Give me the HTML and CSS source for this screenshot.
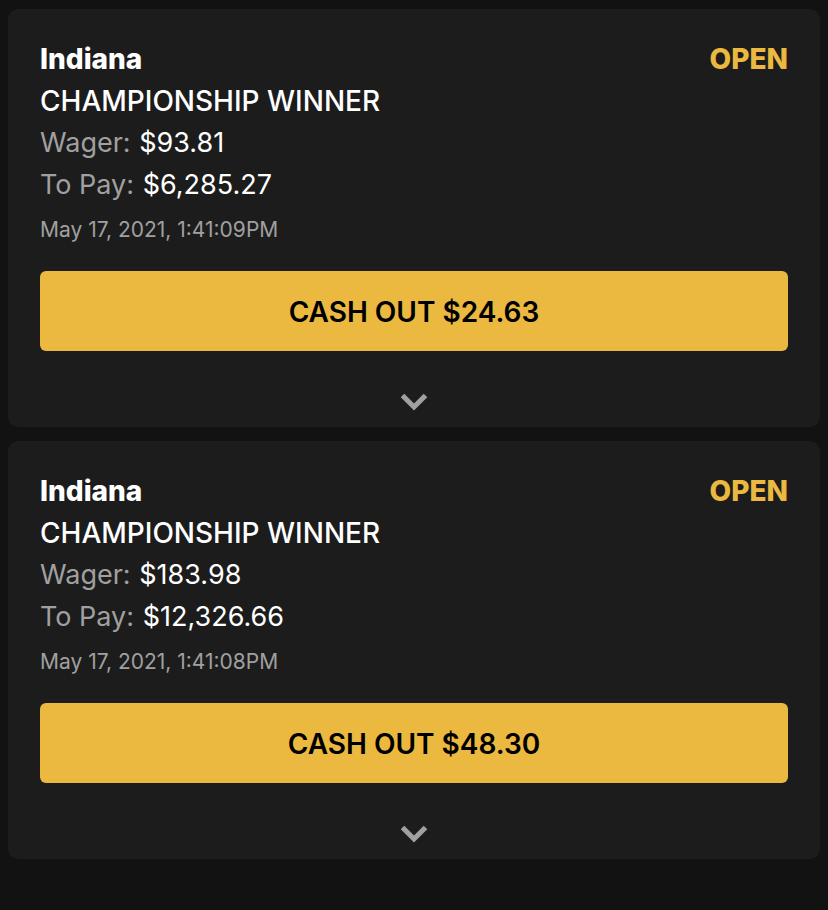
FILE: index.html
```html
<!DOCTYPE html>
<html lang="en">

<head>
    <meta charset="UTF-8">
    <meta name="viewport" content="width=device-width, initial-scale=1.0">
    <title>My Bets</title>
    <link rel="stylesheet" href="styles.css">
</head>

<body>
    <main class="bets">
        <article class="bet">
            <div class="bet-header">
                <h2 class="team">Indiana</h2>
                <span class="status">OPEN</span>
            </div>
            <div class="market">CHAMPIONSHIP WINNER</div>
            <div class="amount"><span class="label">Wager:</span> $93.81</div>
            <div class="amount"><span class="label">To Pay:</span> $6,285.27</div>
            <div class="date">May 17, 2021, 1:41:09PM</div>
            <button class="cash-out" type="button">CASH OUT $24.63</button>
            <button class="expand" type="button" aria-label="Show details">
                <svg class="chevron" viewBox="0 0 28 18"><path d="M2.500 2.500L14 14L25.500 2.500" /></svg>
            </button>
        </article>
        <article class="bet">
            <div class="bet-header">
                <h2 class="team">Indiana</h2>
                <span class="status">OPEN</span>
            </div>
            <div class="market">CHAMPIONSHIP WINNER</div>
            <div class="amount"><span class="label">Wager:</span> $183.98</div>
            <div class="amount"><span class="label">To Pay:</span> $12,326.66</div>
            <div class="date">May 17, 2021, 1:41:08PM</div>
            <button class="cash-out" type="button">CASH OUT $48.30</button>
            <button class="expand" type="button" aria-label="Show details">
                <svg class="chevron" viewBox="0 0 28 18"><path d="M2.500 2.500L14 14L25.500 2.500" /></svg>
            </button>
        </article>
    </main>
</body>

</html>
```

FILE: styles.css
```css
body {
    font-family: Inter, 'Liberation Sans', sans-serif;
    background-color: #121212;
    color: #ffffff;
    margin: 0;
}

.bets {
    display: flex;
    flex-direction: column;
    gap: 14px;
    padding: 9px 8px;
}

.bet {
    display: flex;
    flex-direction: column;
    padding: 29px 32px 7px;
    border-radius: 10px;
    background-color: #1c1c1c;
    font-size: 28px;
    line-height: 42px;
}

.bet-header {
    display: flex;
    justify-content: space-between;
}

.team {
    margin: 0;
    font-size: 28px;
    font-weight: 800;
}

.status {
    color: #ebb93f;
    font-weight: 800;
}

.market {
    font-weight: 500;
}

.amount {
    font-size: 27px;
}

.label {
    margin-right: 1px;
    color: #a0a0a0;
}

.date {
    margin-top: 6px;
    color: #a0a0a0;
    font-size: 21px;
    line-height: 36px;
}

.cash-out {
    height: 80px;
    margin-top: 23px;
    padding: 2px 0 0;
    border: 0;
    border-radius: 6px;
    background-color: #ebb93f;
    color: #000000;
    font-family: inherit;
    font-size: 28px;
    font-weight: 600;
    cursor: pointer;
}

.expand {
    display: flex;
    align-items: center;
    justify-content: center;
    height: 36px;
    margin-top: 33px;
    padding: 0;
    border: 0;
    background: none;
    color: #a0a0a0;
    cursor: pointer;
}

.chevron {
    width: 28px;
    height: 18px;
    fill: none;
    stroke: currentColor;
    stroke-width: 5;
}
```
